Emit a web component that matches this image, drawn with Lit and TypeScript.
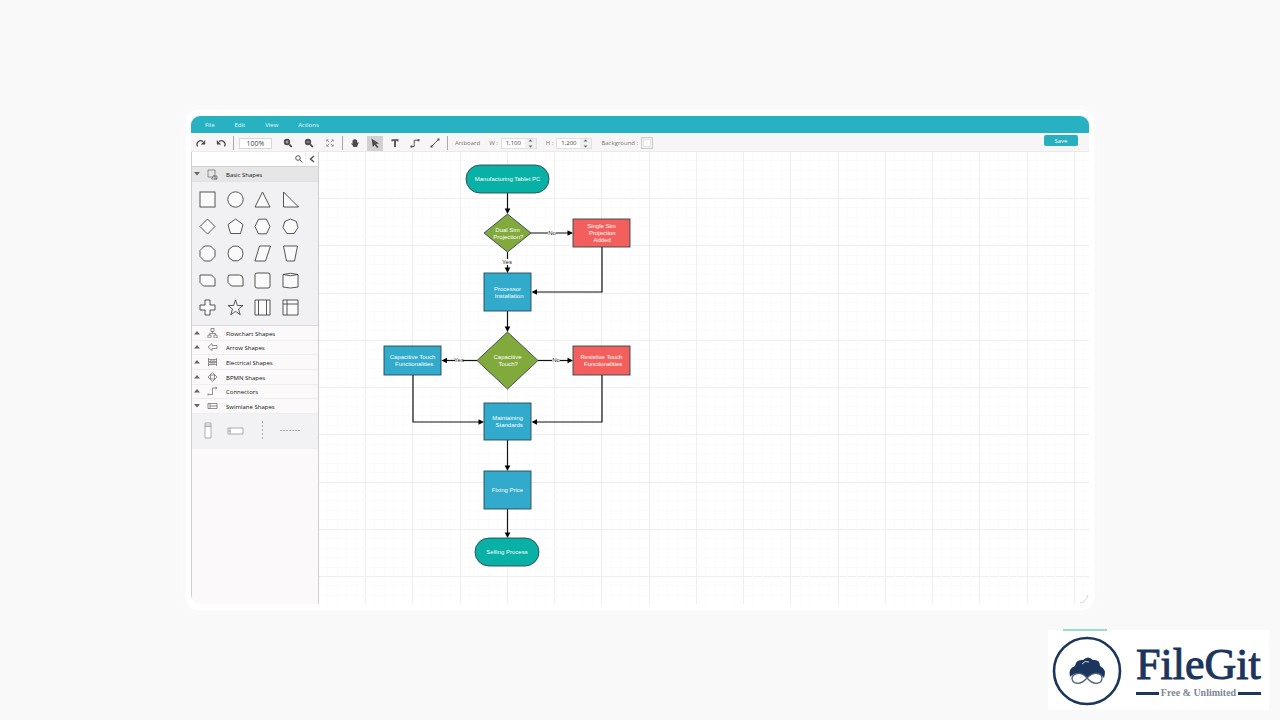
import { LitElement, html, svg, css } from "lit";
import { customElement } from "lit/decorators.js";

type Kind = "pill" | "box" | "diamond";
interface FlowNode { kind: Kind; x: number; y: number; w: number; h: number; tone: string; lines: string[]; }
interface Link { d: string; head: string; label?: string; lx?: number; ly?: number; }

const nodes: FlowNode[] = [
  { kind: "pill", x: 147, y: 13, w: 83, h: 28, tone: "teal", lines: ["Manufacturing Tablet PC"] },
  { kind: "diamond", x: 165, y: 62, w: 47, h: 38, tone: "green", lines: ["Dual Sim", " Projection?"] },
  { kind: "box", x: 254, y: 67, w: 57, h: 28, tone: "red", lines: ["Single Sim", " Projection", " Added"] },
  { kind: "box", x: 165, y: 121, w: 47, h: 38, tone: "blue", lines: ["Processor", "  Installation"] },
  { kind: "diamond", x: 158, y: 180, w: 61, h: 57, tone: "green", lines: ["Capacitive", " Touch?"] },
  { kind: "box", x: 65, y: 194, w: 57, h: 29, tone: "blue", lines: ["Capacitive Touch", "  Functionalities"] },
  { kind: "box", x: 254, y: 194, w: 57, h: 29, tone: "red", lines: ["Resistive Touch", "  Functionalities"] },
  { kind: "box", x: 165, y: 251, w: 47, h: 37, tone: "blue", lines: ["Maintaining", "  Standards"] },
  { kind: "box", x: 165, y: 319, w: 47, h: 38, tone: "blue", lines: ["Fixing Price"] },
  { kind: "pill", x: 156, y: 386, w: 64, h: 28, tone: "teal", lines: ["Selling Process"] },
];

const down = (x: number, y: number) => `M${x} ${y}l-2.8 -5.5h5.6z`;
const right = (x: number, y: number) => `M${x} ${y}l-5.5 -2.8v5.6z`;
const left = (x: number, y: number) => `M${x} ${y}l5.5 -2.8v5.6z`;

const links: Link[] = [
  { d: "M188.5 41V60", head: down(188.5, 62) },
  { d: "M212 81H250", head: right(254, 81), label: "No", lx: 233, ly: 81 },
  { d: "M188.5 100V118", head: down(188.5, 121), label: "Yes", lx: 188, ly: 110 },
  { d: "M283 95V140H215", head: left(212.5, 140) },
  { d: "M188.5 159V176", head: down(188.5, 180) },
  { d: "M158 208.500H126", head: left(122.5, 208.5), label: "Yes", lx: 140, ly: 208 },
  { d: "M219 208.500H250", head: right(254, 208.5), label: "No", lx: 237, ly: 208 },
  { d: "M94 223V270H161", head: right(165, 270) },
  { d: "M283 223V270H215", head: left(212.5, 270) },
  { d: "M188.5 288V316", head: down(188.5, 319) },
  { d: "M188.5 357V383", head: down(188.5, 386) },
];

const outlines = [
  svg`<rect x="1" y="1" width="15" height="15"/>`,
  svg`<circle cx="8.500" cy="8.500" r="7.700"/>`,
  svg`<path d="M8.500 1L16 16H1z"/>`,
  svg`<path d="M1.500 1V16H16.500z"/>`,
  svg`<path d="M8.500 1L16 8.500L8.500 16L1 8.500z"/>`,
  svg`<path d="M8.500 1L16 6.500L13.500 15.500H3.500L1 6.500z"/>`,
  svg`<path d="M4.500 1.200H12.500L16 8.500L12.500 15.800H4.500L1 8.500z"/>`,
  svg`<path d="M8.500 1L14.300 3.500L16 9.500L12.200 15.500H4.800L1 9.500L2.700 3.500z"/>`,
  svg`<path d="M5.500 1H11.500L16 5.500V11.500L11.500 16H5.500L1 11.500V5.500z"/>`,
  svg`<path d="M6 1.200H11L15 4.200L16 8.500L15 12.800L11 15.800H6L2 12.800L1 8.500L2 4.200z"/>`,
  svg`<path d="M5.500 1H16.500L11.500 16H1z"/>`,
  svg`<path d="M1.500 1H15.500L12.500 16H4.500z"/>`,
  svg`<path d="M1 3H12.500L16 6.500V14H4.500L1 10.500z"/>`,
  svg`<path d="M3 3H12.500Q16 3 16 7V14H4.500L1 10.500V5Q1 3 3 3z"/>`,
  svg`<rect x="1" y="1" width="15" height="15" rx="2"/>`,
  svg`<path d="M1 2.500V15Q8.500 17 16 15V2.500Q8.500 0 1 2.500Q8.500 5 16 2.500"/>`,
  svg`<path d="M6 1H11V6H16V11H11V16H6V11H1V6H6z"/>`,
  svg`<path d="M8.500 1L10.400 6.500H16L11.500 10L13.200 15.700L8.500 12.300L3.800 15.700L5.500 10L1 6.500H6.600z"/>`,
  svg`<path d="M1 1H16V16H1zM4.500 1V16M12.500 1V16"/>`,
  svg`<path d="M1 1H16V16H1zM5 1V16M1 5H16"/>`,
];
const outlineNames = ["Rectangle", "Ellipse", "Triangle", "Right triangle", "Diamond", "Pentagon", "Hexagon", "Heptagon", "Octagon", "Decagon", "Parallelogram", "Trapezoid", "Snipped corners", "Snip and round", "Rounded rectangle", "Cylinder", "Plus", "Star", "Predefined process", "Internal storage"];

const categories = [
  { name: "Flowchart Shapes", open: false, icon: svg`<path d="M4 .5h3v3H4zM1 7h3v3H1zM7 7h3v3H7zM5.500 3.500V5.500M2.500 7V5.500H8.500V7"/>` },
  { name: "Arrow Shapes", open: false, icon: svg`<path d="M1 5L5 1.500V3.500H10V6.500H5V8.500z"/>` },
  { name: "Electrical Shapes", open: false, icon: svg`<path d="M1.500 1V9M9.500 1V9M1.500 2.500H9.500M1.500 7.500H9.500M3 4H8V6H3zM1.500 5H9.500"/>` },
  { name: "BPMN Shapes", open: false, icon: svg`<path d="M5.500 .5L10 5L5.500 9.500L1 5zM3.500 3H7.500V7H3.500z"/>` },
  { name: "Connectors", open: false, icon: svg`<path d="M1 8.500H5.500V2H9M1 7.500V9.500M8.500 1L10 2L8.500 3"/>` },
  { name: "Swimlane Shapes", open: true, icon: svg`<path d="M1 2.500H10V7.500H1zM3 2.500V7.500M3 5H10"/>` },
];

const glyph = {
  redo: svg`<path class="line" d="M2.500 9.500A3.800 3.800 0 0 1 8 4.500"/><path d="M10.200 3V7.500H5.800z"/>`,
  undo: svg`<path class="line" d="M9.500 9.500A3.800 3.800 0 0 0 4 4.500"/><path d="M1.800 3V7.500H6.200z"/>`,
  zoomIn: svg`<circle cx="5" cy="5" r="3.200"/><path class="thick" d="M7.300 7.300L9.800 10"/><path class="cut" d="M3.500 5H6.500M5 3.500V6.500"/>`,
  zoomOut: svg`<circle cx="5" cy="5" r="3.200"/><path class="thick" d="M7.300 7.300L9.800 10"/><path class="cut" d="M3.500 5H6.500"/>`,
  fit: svg`<path class="thin" d="M3 3L5.200 5.200M9 3L6.800 5.200M3 9L5.200 6.800M9 9L6.800 6.800M2.800 4.500V2.800H4.500M7.500 2.800H9.200V4.500M9.200 7.500V9.200H7.500M4.500 9.200H2.800V7.500"/>`,
  hand: svg`<path d="M3.500 7V3.500Q4 2.700 4.500 3.500V2.500Q5.100 1.600 5.800 2.500Q6.500 1.800 7.100 2.700Q8 2.400 8.200 3.500V6L9 5.300Q10 5.300 9.700 6L8.300 8.800V10H4.200V8.900L2.200 6.800Q2.400 5.700 3.500 7z"/>`,
  pointer: svg`<path d="M2.500 1.500L10 6.500L7 7L9.500 10L8 11L5.800 8L3.800 10z"/>`,
  text: svg`<path d="M2.500 2.300H9.500V4.600H8.500L8.200 3.800H6.900V10H5.100V3.800H3.800L3.500 4.600H2.500z"/>`,
  elbow: svg`<path class="line slim" d="M2.500 9.500H5.200V3.200H9.500"/><path d="M1.500 8.500h2v2h-2zM8.500 2.200h2v2h-2z"/>`,
  straight: svg`<path class="line slim" d="M2.500 9.500L9.500 2.500"/><path d="M1.500 8.500h2v2h-2zM8.500 1.500h2v2h-2z"/>`,
};

@customElement("app-root")
export class AppRoot extends LitElement {
  static styles = css`
    :host { display: block; font: 6px/8px "Open Sans", "Noto Sans", sans-serif; color: #222; }
    * { box-sizing: border-box; }
    button, input { font: inherit; color: inherit; margin: 0; padding: 0; border: 0; background: none; border-radius: 0; }
    input { outline: 0; min-width: 0; }
    svg { display: block; flex: none; }
    .page { min-height: 100vh; display: flex; flex-direction: column; background: #f9f9f9; }
    .frame { flex: 1; display: flex; margin: 110px 186px 0; padding: 6px 5px; background: #fff; border-radius: 12px; box-shadow: 0 0 8px #fcfcfc; }
    .app { flex: 1; display: flex; flex-direction: column; min-width: 0; overflow: hidden; border-radius: 9px; position: relative; }
    .menu { display: flex; gap: 20px; height: 17px; padding: 0 14px; background: #28b1c1; color: #e9fbfc; }
    .tools { display: flex; align-items: center; height: 19px; padding-top: 1px; background: #f7f5f6; border-top: 1px solid #fff; border-bottom: 1px solid #ebe9ea; color: #777; }
    .group { display: flex; align-items: center; }
    .tool { width: 20px; height: 15px; display: grid; place-items: center; }
    .zooms { padding-left: 3px; gap: 1px; }
    .zooms .percent { margin-right: 5px; }
    .active { width: 16px; margin: 0 2px; background: #d2d0d1; }
    .tool svg { width: 12px; height: 12px; fill: #4c4c4c; }
    .line { fill: none; stroke: #4c4c4c; stroke-width: 1.2; }
    .slim { stroke-width: .9; }
    .thin { fill: none; stroke: #808080; stroke-width: .8; }
    .thick { stroke: #4c4c4c; stroke-width: 1.8; }
    .cut { stroke: #f7f5f6; stroke-width: .6; }
    .sep { width: 1px; height: 14px; margin: 0 2px; background: #aaa; }
    .percent { width: 33px; height: 11px; border: 1px solid #d8d8d8; background: #fff; text-align: center; color: #444; font-size: 7px; }
    .board { padding-left: 5px; }
    .board .field { margin-left: 9px; }
    .field { display: flex; align-items: center; gap: 3px; }
    .num { display: flex; height: 11px; border: 1px solid #e0e0e0; background: #fff; }
    .num input { width: 23px; text-align: center; color: #444; }
    .spin { width: 11px; background: #f0f0f0; display: grid; place-items: center; }
    .spin svg { fill: #666; }
    .swatch { width: 12px; height: 12px; border: 1px solid #ccc; background: #f3f3f3; display: grid; place-items: center; }
    .swatch span { width: 8px; height: 8px; background: #fff; border: 1px solid #e2e2e2; }
    .save { width: 34px; height: 11px; margin: 0 11px 5px auto; border-radius: 2px; background: #26b0c0; color: #fff; line-height: 10px; }
    .work { flex: 1; display: flex; min-height: 0; }
    .side { flex: none; width: 128px; background: #fbf9fa; border: solid #d0ced0; border-width: 0 1px; border-bottom-left-radius: 6px; }
    .search { display: flex; height: 14px; background: #fff; align-items: center; }
    .search input { flex: 1; height: 14px; }
    .search button { width: 13px; height: 14px; display: grid; place-items: center; }
    .search svg { fill: none; stroke: #555; }
    .search .fold { border-left: 1px solid #eee; }
    .cat { display: flex; align-items: center; width: 100%; text-align: left; padding-left: 2px; border-bottom: 1px solid #efedef; color: #111; }
    .cat .caret { fill: #666; }
    .cat .mark { fill: none; stroke: #666; stroke-width: .7; margin: 0 8px 0 7px; }
    .cat span { padding-top: 2px; }
    .basic { height: 16px; background: #e6e6e7; border-top: 1px solid #d2d2d2; border-bottom: 1px solid #e2e2e3; }
    .shapes { display: grid; grid-template-columns: repeat(4, 1fr); grid-auto-rows: 27px; padding: 4px 14px 4px 2px; background: #f1f1f3; border-bottom: 1px solid #d9d9da; place-items: center; }
    .shapes svg { fill: #fafafa; stroke: #444; stroke-width: .9; }
    .cats { display: grid; grid-auto-rows: 1fr; height: 88px; }
    .lanes { display: grid; grid-template-columns: repeat(4, 1fr); place-items: center; height: 35px; padding: 0 14px 2px 2px; background: #f2f2f4; }
    .lanes svg { fill: #fff; stroke: #999; stroke-width: .8; }
    .canvas { flex: 1; min-width: 0; background: #fff; }
    .canvas svg { width: 100%; height: 100%; }
    .major { stroke: #eeeeee; }
    .minor { stroke: #fbfbfb; }
    .link { fill: none; stroke: #111; stroke-width: 1.2; }
    .head { fill: #000; }
    .label { font: 6px "Liberation Sans", Arial, sans-serif; text-anchor: middle; white-space: pre; fill: #fff; }
    .dark { fill: #222; }
    .gap { fill: #fff; }
    .shape { stroke: #2b4a50; stroke-width: .9; }
    .teal { fill: #09b0a5; }
    .green { fill: #82a93c; }
    .red { fill: #f25f5c; }
    .blue { fill: #31aacb; }
    .corner { position: absolute; right: 0; bottom: 0; fill: none; stroke: #d4d4d4; }
    .foot { display: flex; justify-content: flex-end; padding: 20px 11px 10px; }
    .brand { position: relative; display: flex; align-items: center; gap: 13px; width: 221px; height: 80px; padding-left: 3px; background: #fff; color: #1c355c; }
    .accent { position: absolute; left: 15px; top: -1px; width: 44px; height: 2px; background: #9adccc; }
    .words { display: flex; flex-direction: column; width: 125px; padding-top: 2px; font-family: "Liberation Serif", "Times New Roman", serif; }
    .name { font-size: 44px; line-height: 44px; -webkit-text-stroke: 1px #1c355c; }
    .tag { display: flex; align-items: center; gap: 2px; font-size: 10px; line-height: 12px; color: #7d8795; font-weight: 700; white-space: nowrap; }
    .tag i { flex: 1; height: 3px; background: #1c355c; }
  `;

  private tool(name: string, icon: unknown, cls = "") {
    return html`<button class="tool ${cls}" aria-label=${name}><svg viewBox="0 0 12 12">${icon}</svg></button>`;
  }

  private number(label: string, id: string, value: string) {
    return html`<div class="field"><label for=${id}>${label} :</label><div class="num"><input id=${id} .value=${value} /><button class="spin" aria-label="Step ${label}"><svg width="5" height="9"><path d="M.5 2.500L2.500 .5L4.500 2.500zM.5 6.500L2.500 8.500L4.500 6.500z"/></svg></button></div></div>`;
  }

  private caret(open: boolean) {
    return html`<svg class="caret" width="6" height="6"><path d=${open ? "M0 1H6L3 4.500z" : "M0 4.500H6L3 1z"}/></svg>`;
  }

  private grid() {
    const out = [];
    const step = 9.45;
    for (let i = -4; i < 400; i++) {
      const major = i % 5 === 0;
      const x = Math.round(46 + i * step) + 0.5;
      out.push(svg`<path class=${major ? "major" : "minor"} d="M${x} 0V3000M0 ${x}H4000"/>`);
    }
    return out;
  }

  private node(n: FlowNode) {
    const cx = n.x + n.w / 2;
    const cy = n.y + n.h / 2;
    const first = cy + 2 - ((n.lines.length - 1) * 7) / 2;
    const shape = n.kind === "diamond"
      ? svg`<path class="shape ${n.tone}" d="M${cx} ${n.y}L${n.x + n.w} ${cy}L${cx} ${n.y + n.h}L${n.x} ${cy}z"/>`
      : svg`<rect class="shape ${n.tone}" x=${n.x} y=${n.y} width=${n.w} height=${n.h} rx=${n.kind === "pill" ? n.h / 2 : 0}/>`;
    return svg`${shape}${n.lines.map((t, i) => svg`<text class="label" x=${cx} y=${first + i * 7}>${t}</text>`)}`;
  }

  render() {
    return html`<div class="page">
      <main class="frame"><div class="app">
        <nav class="menu">${["File", "Edit", "View", "Actions"].map((m) => html`<button>${m}</button>`)}</nav>
        <div class="tools">
          <div class="group">${this.tool("Redo", glyph.redo)}${this.tool("Undo", glyph.undo)}</div>
          <i class="sep"></i>
          <div class="group zooms"><input class="percent" aria-label="Zoom" .value=${"100%"} />${this.tool("Zoom in", glyph.zoomIn)}${this.tool("Zoom out", glyph.zoomOut)}${this.tool("Fit", glyph.fit)}</div>
          <i class="sep"></i>
          <div class="group">${this.tool("Pan", glyph.hand)}${this.tool("Select", glyph.pointer, "active")}${this.tool("Text", glyph.text)}${this.tool("Elbow connector", glyph.elbow)}${this.tool("Straight connector", glyph.straight)}</div>
          <i class="sep"></i>
          <div class="group board"><span>Artboard</span>${this.number("W", "w", "1,100")}${this.number("H", "h", "1,200")}
            <div class="field"><span>Background :</span><button class="swatch" aria-label="Background"><span></span></button></div></div>
          <button class="save">Save</button>
        </div>
        <div class="work">
          <aside class="side">
            <div class="search"><input aria-label="Search shapes" /><button aria-label="Search"><svg width="8" height="8"><circle cx="3" cy="3" r="2.300"/><path d="M4.800 4.800L7.500 7.500"/></svg></button><button class="fold" aria-label="Collapse"><svg width="6" height="8"><path d="M5 1L1.500 4L5 7" stroke-width="1.500"/></svg></button></div>
            <button class="cat basic">${this.caret(true)}<svg class="mark" width="11" height="11"><path d="M1 1H8V8H1zM7 6L10 10H4.500zM8 7H10V10H7"/></svg><span>Basic Shapes</span></button>
            <div class="shapes">${outlines.map((o, i) => html`<button aria-label=${outlineNames[i]}><svg width="17" height="17">${o}</svg></button>`)}</div>
            <div class="cats">${categories.map((c) => html`<button class="cat">${this.caret(c.open)}<svg class="mark" width="11" height="10">${c.icon}</svg><span>${c.name}</span></button>`)}</div>
            <div class="lanes">
              <button aria-label="Vertical lane"><svg width="8" height="17"><path d="M1 1H7V16H1zM1 3H7M1 4.500H7"/></svg></button>
              <button aria-label="Horizontal lane"><svg width="17" height="8"><path d="M1 1H16V7H1zM3 1V7M1 4H4"/></svg></button>
              <button aria-label="Vertical phase"><svg width="3" height="20"><path d="M1.500 0V20" stroke-dasharray="2 2"/></svg></button>
              <button aria-label="Horizontal phase"><svg width="20" height="3"><path d="M0 1.500H20" stroke-dasharray="2 1"/></svg></button>
            </div>
          </aside>
          <section class="canvas"><svg>
            ${this.grid()}
            ${links.map((l) => svg`<path class="link" d=${l.d}/><path class="head" d=${l.head}/>${l.label ? svg`<rect class="gap" x=${l.lx! - 4} y=${l.ly! - 3} width="8" height="6"/><text class="label dark" x=${l.lx!} y=${l.ly! + 2}>${l.label}</text>` : ""}`)}
            ${nodes.map((n) => this.node(n))}
          </svg></section>
        </div>
        <svg class="corner" width="9" height="9"><path d="M0 8Q6 7 8 0"/></svg>
      </div></main>
      <footer class="foot"><div class="brand"><i class="accent"></i>
        <svg width="72" height="72" viewBox="0 0 72 72"><circle cx="36" cy="37" r="33" fill="none" stroke="#1c355c" stroke-width="2.600"/>
          <path fill="#1c355c" d="M19 43Q17 34 24 32Q25 25 32 26Q37 21 42 26Q49 25 49 32Q56 35 53 44Q48 38 42 40L36 44L30 40Q23 38 19 43z"/>
          <path fill="none" stroke="#fff" stroke-width=".8" d="M31 30Q34 26 38 28"/>
          <path fill="#fff" stroke="#4d607d" stroke-width="1.300" d="M36 44C30 37 22 39 21 44C21 50 29 52 36 44C43 37 51 39 51 44C51 50 43 52 36 44z"/></svg>
        <div class="words"><span class="name">FileGit</span><span class="tag"><i></i>Free &amp; Unlimited<i></i></span></div>
      </div></footer>
    </div>`;
  }
}
